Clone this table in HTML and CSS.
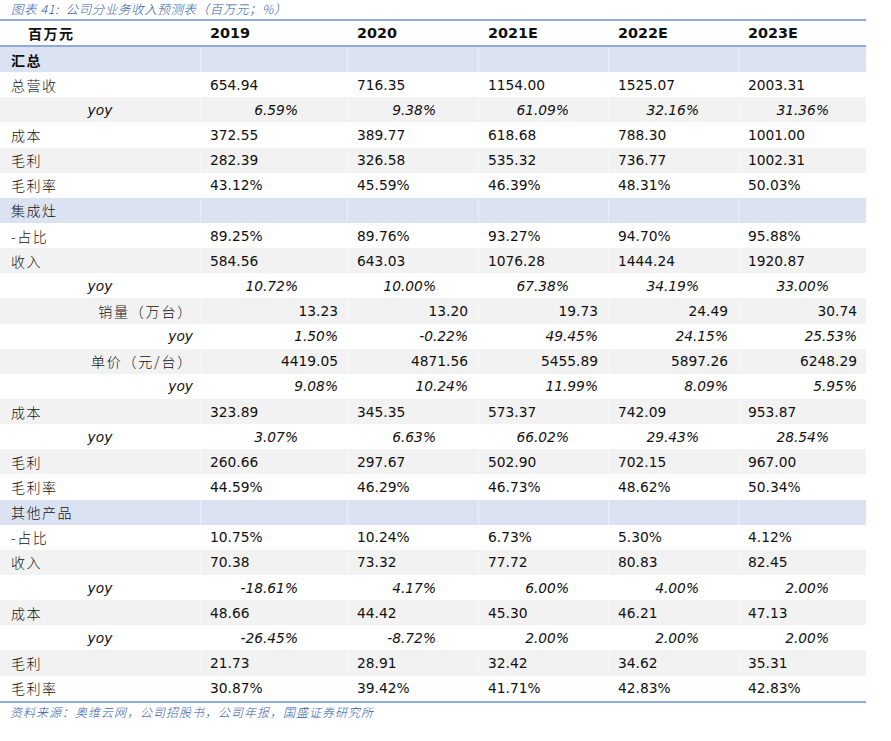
FILE: index.html
```html
<!DOCTYPE html>
<html lang="zh-CN">
<head>
<meta charset="utf-8">
<title>公司分业务收入预测表</title>
<link rel="stylesheet" href="styles.css">
</head>
<body>
<div class="title">图表 41:&nbsp; 公司分业务收入预测表（百万元；%）</div>
<div class="table">
  <div class="row head">
    <div class="lbl">百万元</div><div>2019</div><div>2020</div><div>2021E</div><div>2022E</div><div>2023E</div>
  </div>
  <div class="body">
    <div class="row sec"><div class="lbl strong">汇总</div><div></div><div></div><div></div><div></div><div></div></div>
    <div class="row"><div class="lbl">总营收</div><div>654.94</div><div>716.35</div><div>1154.00</div><div>1525.07</div><div>2003.31</div></div>
    <div class="row g yoy"><div class="lbl">yoy</div><div>6.59%</div><div>9.38%</div><div>61.09%</div><div>32.16%</div><div>31.36%</div></div>
    <div class="row"><div class="lbl">成本</div><div>372.55</div><div>389.77</div><div>618.68</div><div>788.30</div><div>1001.00</div></div>
    <div class="row g"><div class="lbl">毛利</div><div>282.39</div><div>326.58</div><div>535.32</div><div>736.77</div><div>1002.31</div></div>
    <div class="row"><div class="lbl">毛利率</div><div>43.12%</div><div>45.59%</div><div>46.39%</div><div>48.31%</div><div>50.03%</div></div>

    <div class="row sec"><div class="lbl">集成灶</div><div></div><div></div><div></div><div></div><div></div></div>
    <div class="row"><div class="lbl">-占比</div><div>89.25%</div><div>89.76%</div><div>93.27%</div><div>94.70%</div><div>95.88%</div></div>
    <div class="row g"><div class="lbl">收入</div><div>584.56</div><div>643.03</div><div>1076.28</div><div>1444.24</div><div>1920.87</div></div>
    <div class="row yoy"><div class="lbl">yoy</div><div>10.72%</div><div>10.00%</div><div>67.38%</div><div>34.19%</div><div>33.00%</div></div>
    <div class="row g sub"><div class="lbl">销量（万台）</div><div>13.23</div><div>13.20</div><div>19.73</div><div>24.49</div><div>30.74</div></div>
    <div class="row sub it"><div class="lbl">yoy</div><div>1.50%</div><div>-0.22%</div><div>49.45%</div><div>24.15%</div><div>25.53%</div></div>
    <div class="row g sub"><div class="lbl">单价（元/台）</div><div>4419.05</div><div>4871.56</div><div>5455.89</div><div>5897.26</div><div>6248.29</div></div>
    <div class="row sub it"><div class="lbl">yoy</div><div>9.08%</div><div>10.24%</div><div>11.99%</div><div>8.09%</div><div>5.95%</div></div>
    <div class="row g"><div class="lbl">成本</div><div>323.89</div><div>345.35</div><div>573.37</div><div>742.09</div><div>953.87</div></div>
    <div class="row yoy"><div class="lbl">yoy</div><div>3.07%</div><div>6.63%</div><div>66.02%</div><div>29.43%</div><div>28.54%</div></div>
    <div class="row g"><div class="lbl">毛利</div><div>260.66</div><div>297.67</div><div>502.90</div><div>702.15</div><div>967.00</div></div>
    <div class="row"><div class="lbl">毛利率</div><div>44.59%</div><div>46.29%</div><div>46.73%</div><div>48.62%</div><div>50.34%</div></div>

    <div class="row sec"><div class="lbl">其他产品</div><div></div><div></div><div></div><div></div><div></div></div>
    <div class="row"><div class="lbl">-占比</div><div>10.75%</div><div>10.24%</div><div>6.73%</div><div>5.30%</div><div>4.12%</div></div>
    <div class="row g"><div class="lbl">收入</div><div>70.38</div><div>73.32</div><div>77.72</div><div>80.83</div><div>82.45</div></div>
    <div class="row yoy"><div class="lbl">yoy</div><div>-18.61%</div><div>4.17%</div><div>6.00%</div><div>4.00%</div><div>2.00%</div></div>
    <div class="row g"><div class="lbl">成本</div><div>48.66</div><div>44.42</div><div>45.30</div><div>46.21</div><div>47.13</div></div>
    <div class="row yoy"><div class="lbl">yoy</div><div>-26.45%</div><div>-8.72%</div><div>2.00%</div><div>2.00%</div><div>2.00%</div></div>
    <div class="row g"><div class="lbl">毛利</div><div>21.73</div><div>28.91</div><div>32.42</div><div>34.62</div><div>35.31</div></div>
    <div class="row"><div class="lbl">毛利率</div><div>30.87%</div><div>39.42%</div><div>41.71%</div><div>42.83%</div><div>42.83%</div></div>
  </div>
</div>
<div class="source">资料来源：奥维云网，公司招股书，公司年报，国盛证券研究所</div>
</body>
</html>
```
FILE: styles.css
```css
html, body {
  margin: 0;
  padding: 0;
  background: #ffffff;
}
body {
  width: 891px;
  color: #111111;
  font-family: "DejaVu Sans", "Noto Sans CJK SC", sans-serif;
}
.title {
  height: 19px;
  box-sizing: border-box;
  padding-left: 11px;
  font-family: "Noto Sans CJK SC", sans-serif;
  font-style: italic;
  font-weight: 300;
  font-size: 12.5px;
  line-height: 18px;
  letter-spacing: 0.6px;
  color: #2e5ca8;
  white-space: nowrap;
}
.table {
  width: 866px;
  border-top: 2px solid #8eaadb;
  border-bottom: 2px solid #8eaadb;
}
.row {
  display: grid;
  grid-template-columns: 200px 147px 131px 130px 130px 128px;
  height: 25.15px;
  align-items: center;
  font-size: 13.8px;
}
.row > div {
  height: 100%;
  display: flex;
  align-items: center;
  padding-left: 9px;
  box-sizing: border-box;
  white-space: nowrap;
}
.row > div + div {
  border-left: 1px solid rgba(255, 255, 255, 0.45);
}
.head {
  height: 24px;
  border-bottom: 2px solid #8eaadb;
  font-weight: bold;
  font-size: 14.4px;
}
.lbl {
  font-family: "Noto Sans CJK SC", sans-serif;
  font-weight: 300;
  font-size: 14px;
  letter-spacing: 1.5px;
  padding-left: 11px !important;
}
.head .lbl {
  padding-left: 28px !important;
  font-weight: bold;
}
.strong {
  font-weight: bold;
}
.g {
  background: #f2f2f2;
}
.sec {
  background: #dbe2f1;
}
/* main yoy rows */
.yoy {
  font-style: italic;
}
.yoy > div {
  justify-content: flex-end;
  padding-left: 0;
}
.yoy .lbl {
  justify-content: center;
  padding-left: 0 !important;
  font-family: "DejaVu Sans", sans-serif;
  font-weight: normal;
  letter-spacing: 0;
  font-size: 13.8px;
}
.yoy > div:nth-child(2) { padding-right: 49px; }
.yoy > div:nth-child(3) { padding-right: 42px; }
.yoy > div:nth-child(4) { padding-right: 39px; }
.yoy > div:nth-child(5) { padding-right: 39px; }
.yoy > div:nth-child(6) { padding-right: 37px; }
/* indented sub rows */
.sub > div {
  justify-content: flex-end;
  padding-left: 0;
  padding-right: 10px;
}
.sub > div:nth-child(2),
.sub > div:nth-child(6) {
  padding-right: 9px;
}
.sub .lbl {
  padding-left: 0 !important;
  padding-right: 7px;
  letter-spacing: 1.8px;
}
.it {
  font-style: italic;
}
.it .lbl {
  font-family: "DejaVu Sans", sans-serif;
  font-weight: normal;
  letter-spacing: 0;
  font-size: 13.8px;
}
.source {
  padding-left: 10px;
  padding-top: 2px;
  font-family: "Noto Sans CJK SC", sans-serif;
  font-style: italic;
  font-weight: 300;
  font-size: 12px;
  line-height: 14px;
  letter-spacing: 1px;
  color: #2e5ca8;
}
```
